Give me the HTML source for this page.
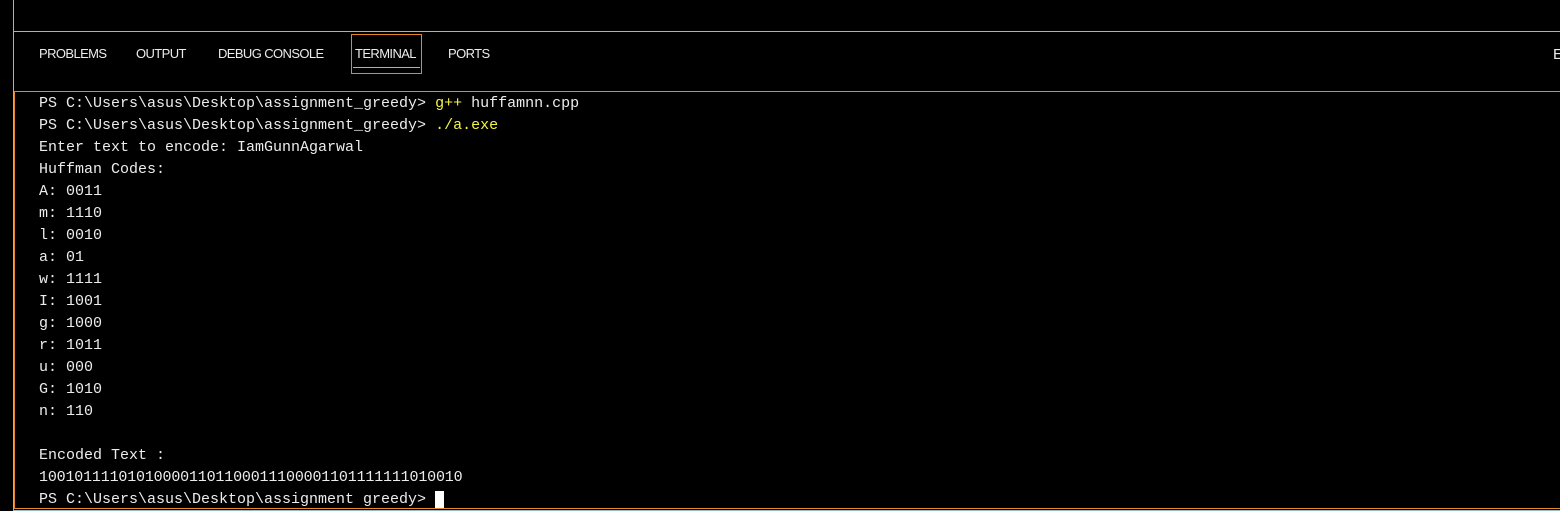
<!DOCTYPE html>
<html><head><style>
body{margin:0;width:1560px;height:511px;background:#000;overflow:hidden;position:relative;font-family:"Liberation Sans",sans-serif}
.l{position:absolute;}
.tab{position:absolute;top:46px;color:#ececec;font-size:13px;letter-spacing:-0.6px}
.term{position:absolute;left:39px;top:93px;font-family:"Liberation Mono",monospace;font-size:15px;line-height:22px;color:#ececec;white-space:pre}
.y{color:#f5f543}
</style></head><body>
<div class="l" style="left:13px;top:0;width:1px;height:511px;background:#8fbcd0"></div>
<div class="l" style="left:14px;top:31px;width:1546px;height:1px;background:#8fbcd0"></div>
<div class="l" style="left:14px;top:91px;width:1546px;height:1px;background:#e8852b"></div>
<div class="l" style="left:14px;top:91px;width:1px;height:418px;background:#e8852b"></div>
<div class="l" style="left:14px;top:508px;width:1546px;height:1px;background:#e8852b"></div>
<div class="l" style="left:14px;top:510px;width:1546px;height:1px;background:#8fbcd0"></div>
<div class="l" style="left:351px;top:34px;width:69px;height:38px;border:1px solid #e8852b"></div>
<div class="l" style="left:353px;top:67px;width:67px;height:1px;background:#8fbcd0"></div>
<div class="tab" style="left:39px">PROBLEMS</div>
<div class="tab" style="left:136px">OUTPUT</div>
<div class="tab" style="left:218px">DEBUG CONSOLE</div>
<div class="tab" style="left:355px">TERMINAL</div>
<div class="tab" style="left:448px">PORTS</div>
<div class="tab" style="left:1553px;font-size:15px">E</div>
<div class="term">PS C:\Users\asus\Desktop\assignment_greedy&gt; <span class="y">g++</span> huffamnn.cpp
PS C:\Users\asus\Desktop\assignment_greedy&gt; <span class="y">./a.exe</span>
Enter text to encode: IamGunnAgarwal
Huffman Codes:
A: 0011
m: 1110
l: 0010
a: 01
w: 1111
I: 1001
g: 1000
r: 1011
u: 000
G: 1010
n: 110

Encoded Text :
<span style="letter-spacing:-0.18px">100101111010100001101100011100001101111111010010</span>
PS C:\Users\asus\Desktop\assignment greedy&gt; <span style="background:#fff"> </span></div>
</body></html>
